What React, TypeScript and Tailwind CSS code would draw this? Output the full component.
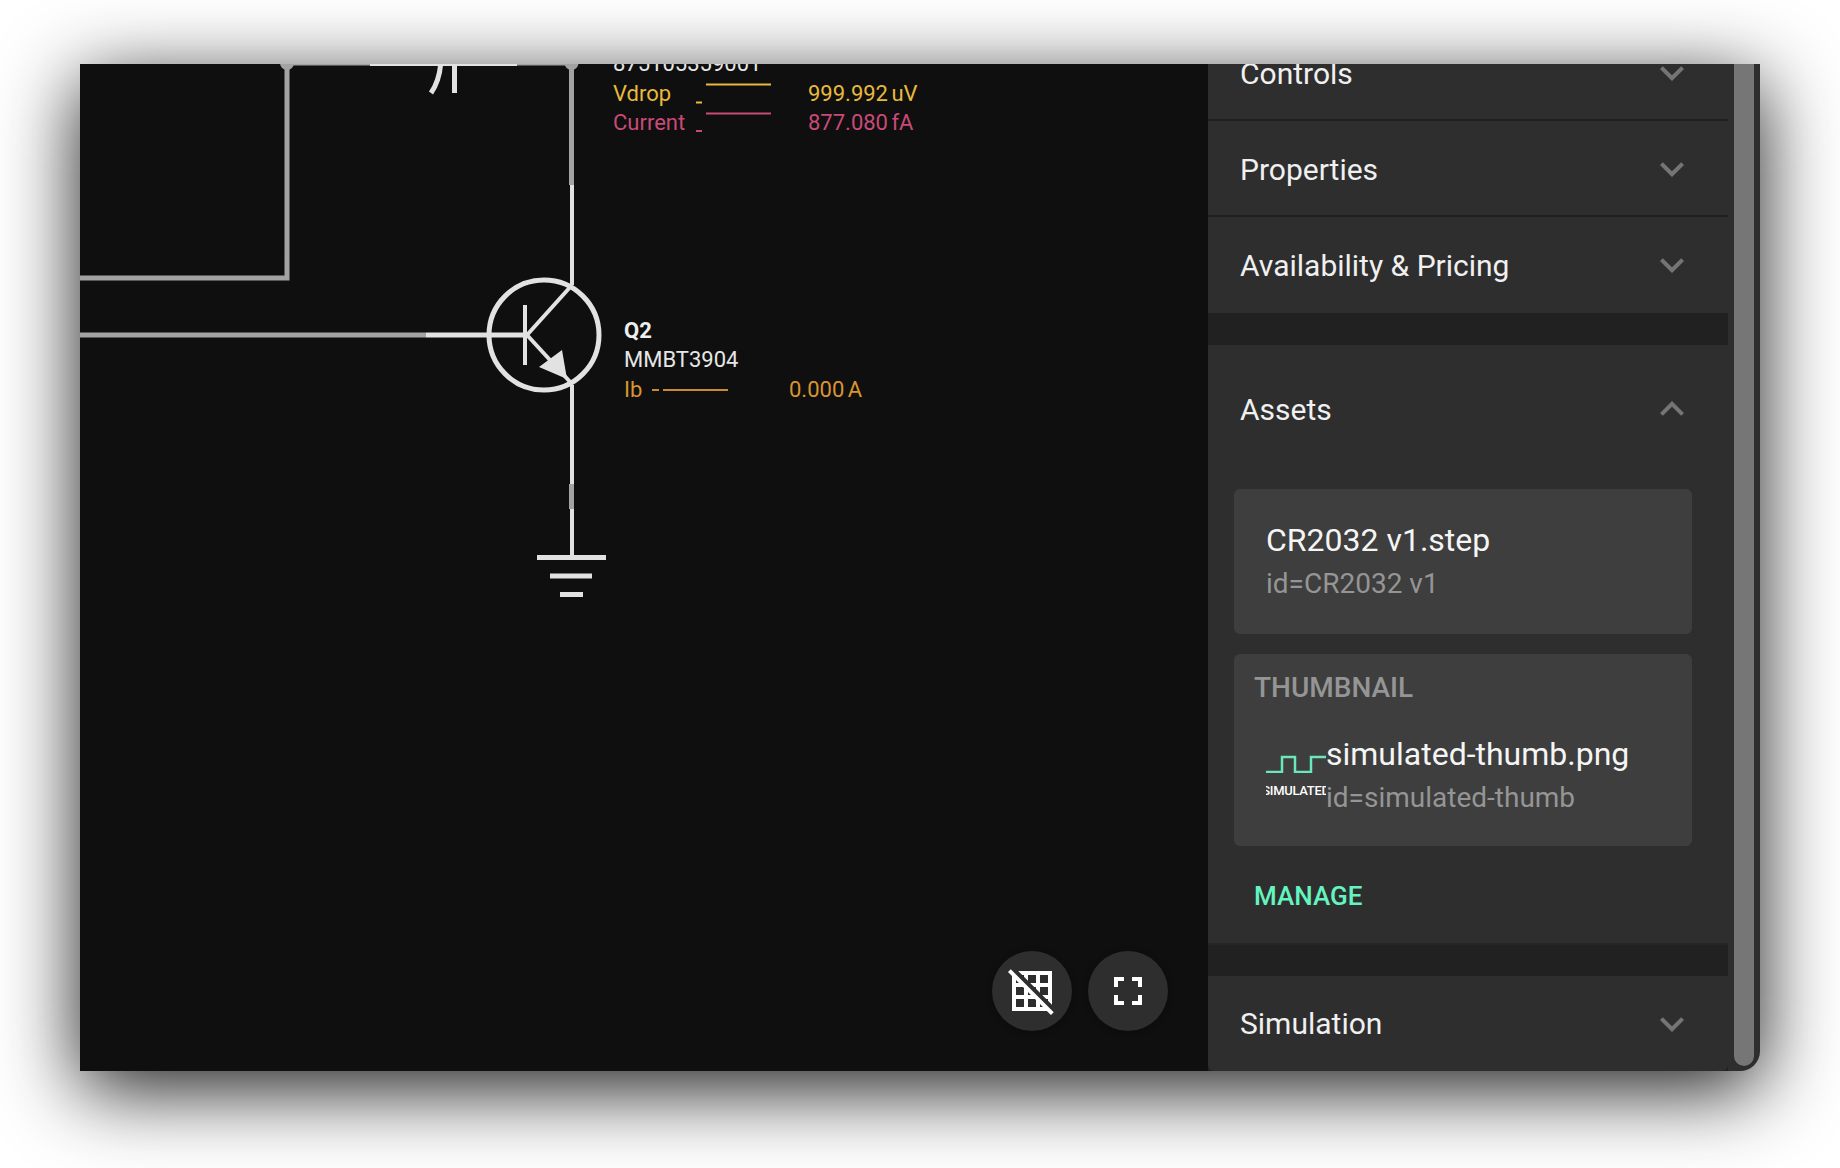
import React from "react";

function Chevron({ up }: { up?: boolean }) {
  return (
    <svg viewBox="0 0 24 24" className="h-12 w-12 fill-[#757575]">
      <path d={up ? "M12 8l-6 6 1.41 1.41L12 10.83l4.59 4.58L18 14z" : "M16.59 8.59L12 13.17 7.41 8.59 6 10l6 6 6-6z"} />
    </svg>
  );
}

function Row({ title }: { title: string }) {
  return (
    <div className="flex h-[96px] items-center justify-between border-b-2 border-[#1f1f1f] px-8 pt-[2px]">
      <span className="text-[30px] text-[#f0f0f0]">{title}</span>
      <Chevron />
    </div>
  );
}

function Schematic() {
  return (
    <svg viewBox="80 64 1128 1007" className="h-full w-full" fill="none" strokeLinecap="butt">
      <g stroke="#a3a3a3" strokeWidth="5">
        <path d="M80 278H287V64" />
        <path d="M287 63.500H571" strokeWidth="4" />
        <path d="M80 335H426" />
        <path d="M571.500 64V185" />
        <path d="M571.500 484V509" />
      </g>
      <circle cx="287" cy="63" r="7" fill="#a3a3a3" />
      <circle cx="571.500" cy="63" r="7" fill="#a3a3a3" />
      <g stroke="#e2e2e2" strokeWidth="4">
        <path d="M370 64H517" />
        <path d="M454.500 64V93" strokeWidth="5" />
        <path d="M441 60Q440 80 431 93" strokeWidth="5" />
        <path d="M572 185V285" />
        <path d="M426 335H526" strokeWidth="5" />
        <circle cx="544" cy="335" r="55" strokeWidth="5" />
        <path d="M525 305V365" />
        <path d="M527 335L572 285" />
        <path d="M527 335L572 384" />
        <path d="M572 385V484" />
        <path d="M572 509V556" />
      </g>
      <path d="M539 367L562 350L567 379Z" fill="#e2e2e2" />
      <path d="M537 557.500H606M550 576H592M560 594.500H583" stroke="#e2e2e2" strokeWidth="5" />
      <path d="M696 102.500H702M706 84.500H771" stroke="#e8b93c" strokeWidth="2" />
      <path d="M696 131H702M706 113.500H771" stroke="#c94a78" strokeWidth="2" />
      <path d="M652 390H659M663 390H728" stroke="#c98a32" strokeWidth="2" />
    </svg>
  );
}

function Canvas() {
  return (
    <div className="relative h-full w-[1128px] shrink-0 bg-[#0f0f0f]">
      <Schematic />
      {/* labels sit on the schematic, so they are placed by coordinate */}
      <span className="absolute left-[533px] top-[-15px] text-[22px] leading-[30px] text-[#e6e6e6]">875105359001</span>
      <span className="absolute left-[533px] top-[15px] text-[22px] leading-[30px] text-[#e8b93c]">Vdrop</span>
      <span className="absolute left-[728px] top-[15px] text-[22px] leading-[30px] [word-spacing:-2px] text-[#e8b93c]">999.992 uV</span>
      <span className="absolute left-[533px] top-[44px] text-[22px] leading-[30px] text-[#c94a78]">Current</span>
      <span className="absolute left-[728px] top-[44px] text-[22px] leading-[30px] [word-spacing:-2px] text-[#c94a78]">877.080 fA</span>
      <span className="absolute left-[544px] top-[252px] text-[22px] font-bold leading-[30px] text-[#eeeeee]">Q2</span>
      <span className="absolute left-[544px] top-[281px] text-[22px] leading-[30px] text-[#e6e6e6]">MMBT3904</span>
      <span className="absolute left-[544px] top-[311px] text-[22px] leading-[30px] text-[#d9952f]">Ib</span>
      <span className="absolute left-[709px] top-[311px] text-[22px] leading-[30px] [word-spacing:-2px] text-[#d9952f]">0.000 A</span>
      <div className="absolute bottom-10 right-10 flex gap-4">
        <button className="flex h-20 w-20 items-center justify-center rounded-full bg-[#2e2e2e] shadow-[0_1px_6px_rgba(0,0,0,0.3)]">
          <svg viewBox="0 0 24 24" className="h-12 w-12 fill-white">
            <path d="M8 4v.89l2 2V4h4v4h-2.89l2 2H14v.89l2 2V10h4v4h-2.89l2 2H20v.89l2 2V2H5.110l2 2H8zm8 0h4v4h-4V4zM1.410 1.140L0 2.550l2 2V22h17.450l2.010 2.010 1.410-1.410L1.410 1.140zM10 12.550L11.450 14H10v-1.450zm-6-6L5.450 8H4V6.550zM8 20H4v-4h4v4zm0-6H4v-4h3.450l.55.55V14zm6 6h-4v-4h3.450l.55.55V20zm2 0v-1.450L17.450 20H16z" />
          </svg>
        </button>
        <button className="flex h-20 w-20 items-center justify-center rounded-full bg-[#2e2e2e] shadow-[0_1px_6px_rgba(0,0,0,0.3)]">
          <svg viewBox="0 0 24 24" className="h-12 w-12 fill-white">
            <path d="M7 14H5v5h5v-2H7v-3zm-2-4h2V7h3V5H5v5zm12 7h-3v2h5v-5h-2v3zM14 5v2h3v3h2V5h-5z" />
          </svg>
        </button>
      </div>
    </div>
  );
}

function Thumb() {
  return (
    <div className="flex h-[60px] w-[60px] shrink-0 flex-col overflow-hidden">
      <svg viewBox="0 0 60 20" className="h-5 w-[60px] shrink-0" fill="none">
        <path d="M0 19H16V4H29V19H45V4H60" stroke="#6ae8ba" strokeWidth="2.500" />
      </svg>
      <div className="mt-[10px] flex justify-center whitespace-nowrap text-[13px] font-medium leading-[16px] tracking-[-0.3px] text-white">
        SIMULATED
      </div>
    </div>
  );
}

function Assets() {
  return (
    <div className="border-b-2 border-[#262626] bg-[#2e2e2e]">
      <div className="flex h-[128px] items-center justify-between px-8">
        <span className="text-[30px] text-[#f0f0f0]">Assets</span>
        <Chevron up />
      </div>
      <div className="mx-[26px] mt-4 flex h-[145px] w-[458px] flex-col justify-center rounded-[6px] bg-[#3d3e3d] px-8">
        <div className="text-[32px] leading-[42px] text-[#f5f5f5]">CR2032 v1.step</div>
        <div className="pt-[2px] text-[28px] leading-[42px] text-[#959595]">id=CR2032 v1</div>
      </div>
      <div className="mx-[26px] mt-5 h-[192px] w-[458px] rounded-[6px] bg-[#3d3e3d] px-5 pt-4">
        <div className="text-[28px] font-medium leading-[36px] text-[#959595]">THUMBNAIL</div>
        <div className="mt-[27px] flex pl-3">
          <div className="pt-[20px]">
            <Thumb />
          </div>
          <div>
            <div className="text-[32px] leading-[42px] text-[#f5f5f5]">simulated-thumb.png</div>
            <div className="pt-[1px] text-[28px] leading-[44px] text-[#959595]">id=simulated-thumb</div>
          </div>
        </div>
      </div>
      <div className="px-[46px] pb-[29px] pt-[32px] text-[26px] font-medium leading-[36px] text-[#64f4c0]">MANAGE</div>
    </div>
  );
}

function Panel() {
  return (
    <div className="h-full w-[520px] shrink-0 overflow-hidden bg-[#212121]">
      <div className="-mt-[39px]">
        <div className="bg-[#2e2e2e]">
          <Row title="Controls" />
          <Row title="Properties" />
          <div className="flex h-[96px] items-center justify-between px-8">
            <span className="text-[30px] text-[#f0f0f0]">Availability &amp; Pricing</span>
            <Chevron />
          </div>
        </div>
        <div className="h-[32px]" />
        <Assets />
        <div className="h-[31px]" />
        <div className="flex h-[95px] items-center justify-between rounded-b-[6px] bg-[#2e2e2e] px-8">
          <span className="text-[30px] text-[#f0f0f0]">Simulation</span>
          <Chevron />
        </div>
      </div>
    </div>
  );
}

export default function App() {
  return (
    <div className="h-[1168px] w-[1840px] overflow-hidden bg-white pl-20 pt-16 font-['Roboto',sans-serif]">
      <div className="flex h-[1007px] w-[1680px] overflow-hidden rounded-br-[20px] bg-[#2e2e2e] shadow-[0_18px_80px_rgba(0,0,0,0.9)]">
        <Canvas />
        <Panel />
        <div className="flex-1 pb-[5px] pl-[6px] pr-[6px]">
          <div className="h-full rounded-b-[10px] bg-[#767676]" />
        </div>
      </div>
    </div>
  );
}
